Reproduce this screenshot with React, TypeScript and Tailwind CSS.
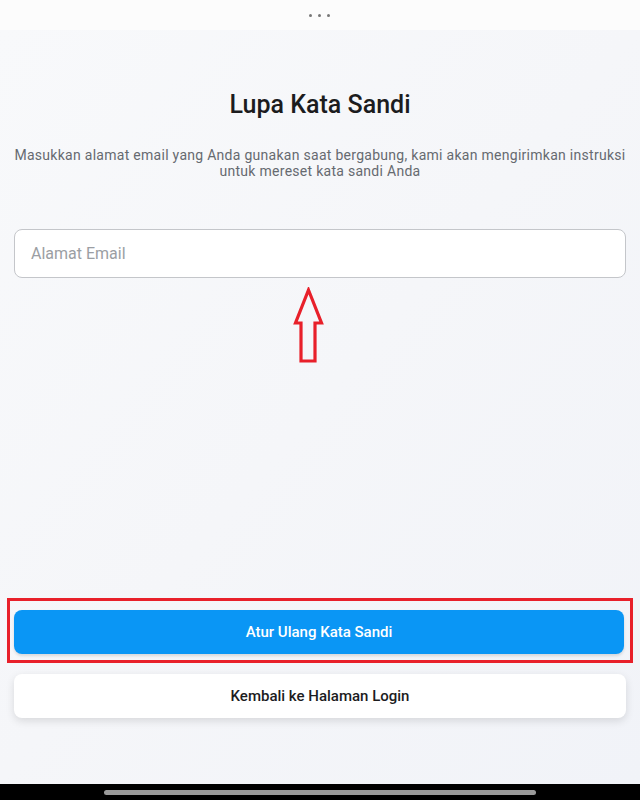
import React from "react";

const font = { fontFamily: "Roboto, 'Noto Sans', sans-serif" };

const UpArrow = () => (
  <svg width="34" height="78" viewBox="0 0 34 78" className="block">
    <path
      d="M16.5 3 L29.5 36 L23 36 L23 74 L9 74 L9 36 L3.5 36 Z"
      fill="none"
      stroke="#e8202a"
      strokeWidth="3.2"
      strokeLinejoin="miter"
    />
  </svg>
);

export default function App() {
  return (
    <div
      className="flex h-[800px] w-[640px] flex-col overflow-hidden bg-[#f4f5f8]"
      style={font}
    >
      {/* status area */}
      <div className="flex h-[30px] items-center justify-center gap-[6px] bg-[#fcfcfc] pr-[2px]">
        <span className="size-[3px] rounded-full bg-[#777]" />
        <span className="size-[3px] rounded-full bg-[#777]" />
        <span className="size-[3px] rounded-full bg-[#777]" />
      </div>

      <div className="flex flex-1 flex-col bg-gradient-to-br from-[#f8f9fb] via-[#f5f6f9] to-[#f1f3f8] px-[14px]">
        <h1 className="mt-[60px] text-center text-[25px] font-medium leading-[30px] text-[#1c1c1e]">
          Lupa Kata Sandi
        </h1>
        <p className="-mx-[8px] mt-[27px] text-center text-[14px] leading-[16px] tracking-[0.28px] text-[#666a70]">
          Masukkan alamat email yang Anda gunakan saat bergabung, kami akan mengirimkan instruksi
          untuk mereset kata sandi Anda
        </p>

        <div className="mt-[50px] flex h-[49px] items-center rounded-[8px] border border-[#c4c6ca] bg-white px-[16px]">
          <span className="text-[16px] text-[#9b9ea3]">Alamat Email</span>
        </div>

        <div className="mt-[9px] flex justify-center pr-[22px]">
          <UpArrow />
        </div>

        <div className="flex-1" />

        <div className="-mx-[7px] border-[3px] border-[#e8202a] pb-[6px] pl-[4px] pr-[6px] pt-[9px]">
          <button className="flex h-[44px] w-full items-center justify-center rounded-[8px] bg-[#0a96f5] text-[15px] font-medium text-white shadow-[0_2px_3px_rgba(0,0,0,0.12)]">
            Atur Ulang Kata Sandi
          </button>
        </div>

        <button className="mt-[11px] flex h-[44px] w-full items-center justify-center rounded-[8px] bg-white text-[15px] font-medium text-[#1c1c1e] shadow-[0_3px_8px_rgba(0,0,0,0.12)]">
          Kembali ke Halaman Login
        </button>

        <div className="h-[66px]" />
      </div>

      <div className="flex h-[16px] items-center justify-center bg-black">
        <span className="h-[5px] w-[432px] rounded-full bg-[#9a9a9a]" />
      </div>
    </div>
  );
}
